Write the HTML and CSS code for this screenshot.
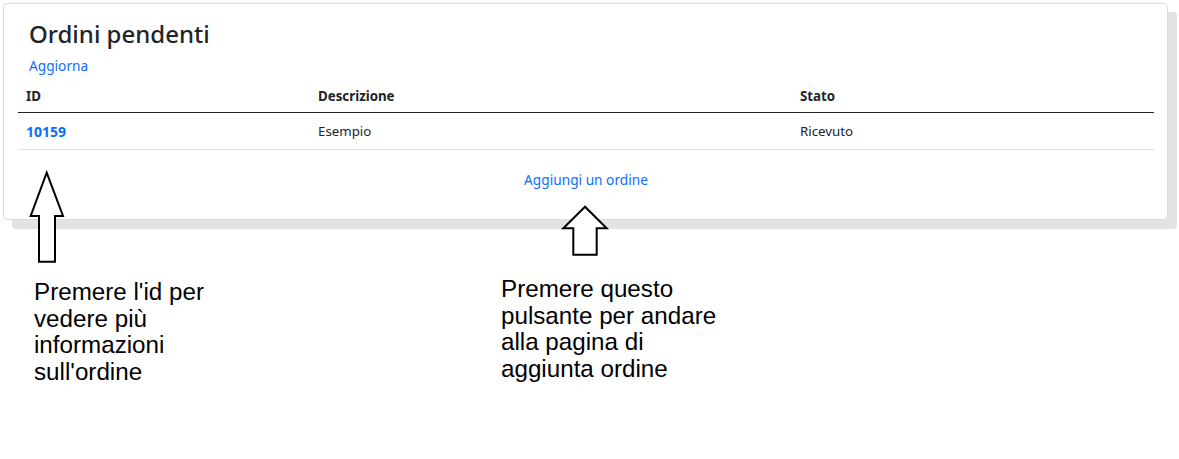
FILE: index.html
```html
<!DOCTYPE html>
<html lang="it">
<head>
<meta charset="utf-8">
<title>Ordini pendenti</title>
<link rel="stylesheet" href="styles.css">
</head>
<body>
<div class="page">
  <div class="card">
    <h1 class="title">Ordini pendenti</h1>
    <a class="refresh" href="#">Aggiorna</a>
    <table class="orders">
      <thead>
        <tr><th class="c-id">ID</th><th class="c-desc">Descrizione</th><th class="c-state">Stato</th></tr>
      </thead>
      <tbody>
        <tr><td><a class="id-link" href="#">10159</a></td><td>Esempio</td><td>Ricevuto</td></tr>
      </tbody>
    </table>
    <div class="add-row"><a class="add-link" href="#">Aggiungi un ordine</a></div>
  </div>

  <svg class="arrow arrow-id" width="40" height="100" viewBox="0 0 40 100">
    <path d="M17.7 1.7 L1.7 45 L10 45 L10 90.7 L26 90.7 L26 45 L34 45 Z" fill="#fff" stroke="#000" stroke-width="2" stroke-linejoin="miter"/>
  </svg>
  <svg class="arrow arrow-add" width="50" height="56" viewBox="0 0 50 56">
    <path d="M23 1.7 L1.3 23.3 L11.3 23.3 L11.3 49.7 L34.7 49.7 L34.7 23.3 L44.7 23.3 Z" fill="#fff" stroke="#000" stroke-width="2" stroke-linejoin="miter"/>
  </svg>

  <p class="note note-id">Premere l'id per<br>vedere più<br>informazioni<br>sull'ordine</p>
  <p class="note note-add">Premere questo<br>pulsante per andare<br>alla pagina di<br>aggiunta ordine</p>
</div>
</body>
</html>
```
FILE: styles.css
```css
html, body {
  margin: 0;
  padding: 0;
  background: #fff;
}
.page {
  position: relative;
  width: 1179px;
  height: 459px;
  overflow: hidden;
  font-family: "Noto Sans", "Open Sans", sans-serif;
  color: #212529;
}
.card {
  margin: 3px 0 0 3px;
  width: 1165px;
  height: 217px;
  box-sizing: border-box;
  border: 1px solid #dcdcdc;
  border-radius: 4px;
  background: #fff;
  box-shadow: 9px 9px 0 #e3e3e3;
  padding: 15px 13px 0 14px;
}
.title {
  margin: 0 0 7px 11px;
  font-size: 24px;
  line-height: 30px;
  font-weight: 500;
  color: #212529;
}
.refresh {
  display: block;
  margin-left: 11px;
  font-size: 13.7px;
  line-height: 20px;
  color: #0d6efd;
  text-decoration: none;
}
.orders {
  width: 100%;
  border-collapse: collapse;
  margin-top: 1px;
  font-size: 13.3px;
}
.orders th {
  text-align: left;
  font-weight: 700;
  padding: 2px 8px 0;
  height: 33px;
  border-bottom: 1px solid #212529;
}
.orders td {
  padding: 0 8px;
  height: 36px;
  border-bottom: 1px solid #dee2e6;
}
.c-id { width: 276px; }
.c-desc { width: 466px; }
.id-link {
  color: #0d6efd;
  font-weight: 700;
  font-size: 14px;
  text-decoration: none;
}
.add-row {
  text-align: center;
  padding-top: 19px;
  line-height: 20px;
}
.add-link {
  font-size: 13.7px;
  color: #0d6efd;
  text-decoration: none;
}
.arrow {
  position: absolute;
  overflow: visible;
}
.arrow-id { left: 29px; top: 171px; }
.arrow-add { left: 562px; top: 205px; }
.note {
  position: absolute;
  margin: 0;
  font-family: "Liberation Sans", Arial, sans-serif;
  font-size: 24.2px;
  line-height: 26.7px;
  color: #000;
}
.note-id { left: 34px; top: 279px; }
.note-add { left: 501px; top: 276px; }
```
